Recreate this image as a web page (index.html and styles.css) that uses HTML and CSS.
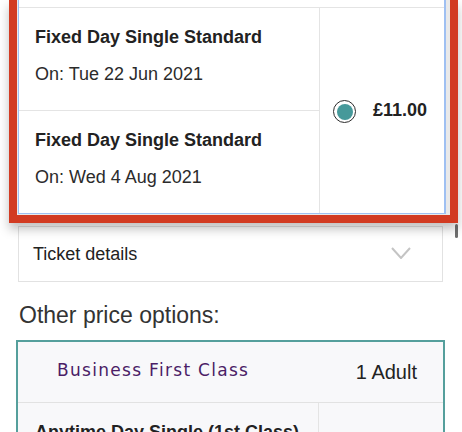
FILE: index.html
```html
<!DOCTYPE html>
<html lang="en">
  <head>
    <meta charset="UTF-8" />
    <meta name="viewport" content="width=device-width, initial-scale=1.0" />
    <title>Ticket options</title>
    <link rel="stylesheet" href="styles.css">
  </head>
  <body>
    <div class="page">
      <div class="selected">
        <div class="card">
          <div class="stub"></div>
          <div class="fareGrid">
            <div class="legs">
              <div class="leg">
                <div class="legTitle">Fixed Day Single Standard</div>
                <div class="legDate">On: Tue 22 Jun 2021</div>
              </div>
              <div class="leg">
                <div class="legTitle">Fixed Day Single Standard</div>
                <div class="legDate">On: Wed 4 Aug 2021</div>
              </div>
            </div>
            <div class="priceCell">
              <span class="radio checked"></span>
              <span class="price">£11.00</span>
            </div>
          </div>
        </div>
      </div>

      <div class="details">
        <span>Ticket details</span>
        <svg class="chevron" width="20" height="12" viewBox="0 0 20 12">
          <polyline points="1,1 10,11 19,1" fill="none" stroke="#c4c4c4" stroke-width="2" />
        </svg>
      </div>

      <h2 class="otherTitle">Other price options:</h2>

      <div class="optionBox">
        <div class="optionHead">
          <span class="className">Business First Class</span>
          <span class="passengers">1 Adult</span>
        </div>
        <div class="fareGrid">
          <div class="legs">
            <div class="leg">
              <div class="legTitle">Anytime Day Single (1st Class)</div>
            </div>
          </div>
          <div class="priceCell"></div>
        </div>
      </div>
    </div>
    <div class="scrollThumb"></div>
  </body>
</html>
```

FILE: styles.css
```css
* {
  padding: 0;
  margin: 0;
  box-sizing: border-box;
}
body {
  background-color: #fff;
  font-family: "Liberation Sans", Arial, sans-serif;
  color: #222;
  overflow: hidden;
}
.page {
  width: 462px;
  min-height: 432px;
}
.selected {
  position: relative;
  z-index: 1;
  margin: 0 4px 0 9px;
  border: 8px solid #d23b22;
  border-top: 0;
  padding: 0 4px 1px 1px;
  background-color: #e9e9e9;
  box-shadow: 0 6px 10px rgba(0, 0, 0, 0.25);
}
.card {
  background-color: #fff;
  border: 1px solid #9fc0f2;
  border-top: 0;
  border-right-width: 2px;
}
.stub {
  height: 7px;
}
.fareGrid {
  display: grid;
  grid-template-columns: 301px 1fr;
  border-top: 1px solid #e4e4e4;
}
.legs {
  border-right: 1px solid #e4e4e4;
}
.leg {
  height: 102px;
  padding: 18px 0 0 16px;
}
.leg + .leg {
  border-top: 1px solid #e4e4e4;
  height: 103px;
}
.legTitle {
  font-size: 18px;
  line-height: 22px;
  font-weight: bold;
  color: #222;
}
.legDate {
  margin-top: 15px;
  font-size: 18px;
  line-height: 22px;
  color: #2b2b2b;
}
.priceCell {
  display: flex;
  align-items: center;
  padding-left: 13px;
  gap: 17px;
}
.radio {
  width: 23px;
  height: 23px;
  border-radius: 50%;
  border: 1.5px solid #2c2c2c;
  background-color: #fff;
  display: flex;
  align-items: center;
  justify-content: center;
  margin-top: 2px;
}
.radio.checked::after {
  content: "";
  width: 16px;
  height: 16px;
  border-radius: 50%;
  background-color: #46999a;
}
.price {
  font-size: 18px;
  font-weight: bold;
  color: #222;
}

.details {
  margin: 3px 19px 0 18px;
  height: 56px;
  border: 1px solid #e2e2e2;
  display: flex;
  justify-content: space-between;
  align-items: center;
  padding: 0 31px 0 14px;
  font-size: 18px;
  color: #222;
}
.chevron {
  margin-bottom: 2px;
}

.otherTitle {
  margin: 19px 0 0 19px;
  font-size: 23px;
  line-height: 28px;
  font-weight: normal;
  color: #333;
}

.optionBox {
  margin: 11px 17px 0 16px;
  border: 2px solid #559f9c;
  background-color: #f8f8fa;
}
.optionHead {
  height: 60px;
  display: flex;
  justify-content: space-between;
  align-items: center;
  padding: 0 26px 0 39px;
}
.className {
  font-family: "DejaVu Sans", sans-serif;
  font-size: 17px;
  letter-spacing: 1.3px;
  color: #4b1d66;
  margin-bottom: 4px;
}
.passengers {
  font-size: 20px;
  color: #222;
}
.optionBox .fareGrid {
  border-top-color: #e2e2e2;
}
.optionBox .leg {
  padding-left: 17px;
}

.scrollThumb {
  position: absolute;
  top: 224px;
  left: 455px;
  width: 3px;
  height: 14px;
  border-radius: 2px;
  background-color: #6f6f6f;
}
```
